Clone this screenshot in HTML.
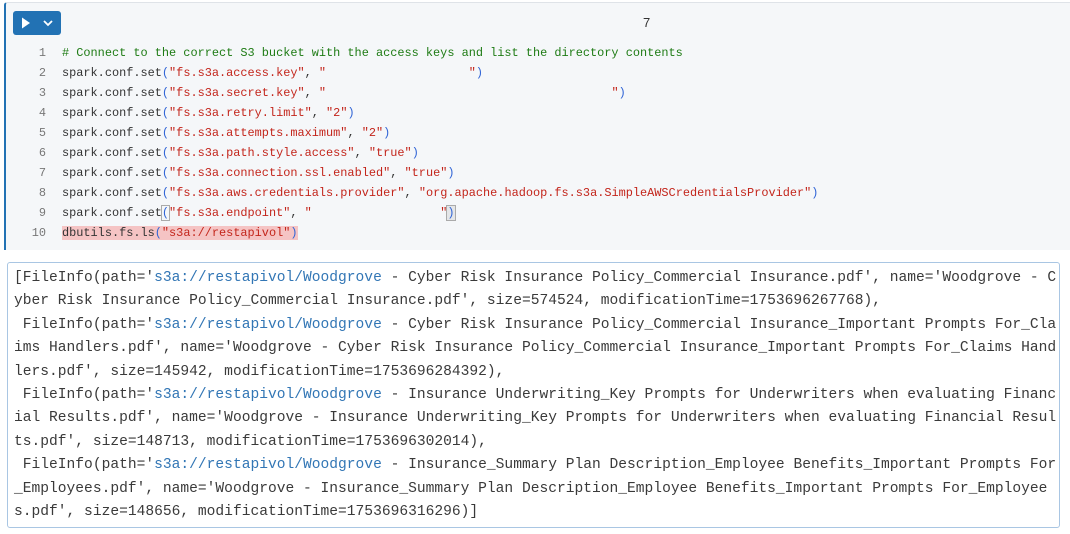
<!DOCTYPE html>
<html><head><style>
body{margin:0;width:1070px;height:534px;background:#fff;overflow:hidden;font-family:"Liberation Mono",monospace}
.cell{position:absolute;left:4px;top:2px;width:1066px;height:248px;background:#f5f7f9;border-top:1px solid #dfe3e8;border-left:2px solid #2272b4;box-sizing:border-box;border-top-left-radius:3px}
.run{position:absolute;left:13px;top:11px;width:48px;height:24px;background:#2272b4;border-radius:3px}
.num7{position:absolute;left:643px;top:15px;font-family:"Liberation Sans",sans-serif;font-size:13px;color:#333}
.code{position:absolute;left:0;top:43px;font-size:11.9px;line-height:20px;white-space:pre;color:#333}
.ln{display:inline-block;width:46px;text-align:right;padding-right:16px;color:#777}
.c{color:#1e7b14}.s{color:#c3251b}.p{color:#3064d6}
.hl{background:#f5c4c4}
.out{position:absolute;left:7px;top:262px;width:1053px;height:266px;border:1px solid #a9c6e3;border-radius:3px;box-sizing:border-box;background:#fff}
.otext{position:absolute;left:14px;top:267px;font-size:14.6px;line-height:23.4px;white-space:pre;color:#3a3a3a}
.u{color:#3276b5}
</style></head><body>
<div class="cell"></div>
<div class="run"><svg width="48" height="24"><path d="M9 6.5 L17 12 L9 17.5Z" fill="#fff"/><path d="M31 10 L35 14 L39 10" stroke="#fff" stroke-width="1.8" fill="none"/></svg></div>
<div class="num7">7</div>
<div class="code"><span class="ln">1</span><span class="c"># Connect to the correct S3 bucket with the access keys and list the directory contents</span>
<span class="ln">2</span>spark.conf.set<span class="p">(</span><span class="s">"fs.s3a.access.key"</span>, <span class="s">"                    "</span><span class="p">)</span>
<span class="ln">3</span>spark.conf.set<span class="p">(</span><span class="s">"fs.s3a.secret.key"</span>, <span class="s">"                                        "</span><span class="p">)</span>
<span class="ln">4</span>spark.conf.set<span class="p">(</span><span class="s">"fs.s3a.retry.limit"</span>, <span class="s">"2"</span><span class="p">)</span>
<span class="ln">5</span>spark.conf.set<span class="p">(</span><span class="s">"fs.s3a.attempts.maximum"</span>, <span class="s">"2"</span><span class="p">)</span>
<span class="ln">6</span>spark.conf.set<span class="p">(</span><span class="s">"fs.s3a.path.style.access"</span>, <span class="s">"true"</span><span class="p">)</span>
<span class="ln">7</span>spark.conf.set<span class="p">(</span><span class="s">"fs.s3a.connection.ssl.enabled"</span>, <span class="s">"true"</span><span class="p">)</span>
<span class="ln">8</span>spark.conf.set<span class="p">(</span><span class="s">"fs.s3a.aws.credentials.provider"</span>, <span class="s">"org.apache.hadoop.fs.s3a.SimpleAWSCredentialsProvider"</span><span class="p">)</span>
<span class="ln">9</span>spark.conf.set<span class="p" style="outline:1px solid #aaa">(</span><span class="s">"fs.s3a.endpoint"</span>, <span class="s">"                  "</span><span class="p" style="outline:1px solid #aaa;background:#e4e6e8">)</span>
<span class="ln">10</span><span class="hl">dbutils.fs.ls<span class="p">(</span><span class="s">"s3a://restapivol"</span><span class="p">)</span></span></div>
<div class="out"></div>
<div class="otext">[FileInfo(path='<span class="u">s3a://restapivol/Woodgrove</span> - Cyber Risk Insurance Policy_Commercial Insurance.pdf', name='Woodgrove - C
yber Risk Insurance Policy_Commercial Insurance.pdf', size=574524, modificationTime=1753696267768),
 FileInfo(path='<span class="u">s3a://restapivol/Woodgrove</span> - Cyber Risk Insurance Policy_Commercial Insurance_Important Prompts For_Cla
ims Handlers.pdf', name='Woodgrove - Cyber Risk Insurance Policy_Commercial Insurance_Important Prompts For_Claims Hand
lers.pdf', size=145942, modificationTime=1753696284392),
 FileInfo(path='<span class="u">s3a://restapivol/Woodgrove</span> - Insurance Underwriting_Key Prompts for Underwriters when evaluating Financ
ial Results.pdf', name='Woodgrove - Insurance Underwriting_Key Prompts for Underwriters when evaluating Financial Resul
ts.pdf', size=148713, modificationTime=1753696302014),
 FileInfo(path='<span class="u">s3a://restapivol/Woodgrove</span> - Insurance_Summary Plan Description_Employee Benefits_Important Prompts For
_Employees.pdf', name='Woodgrove - Insurance_Summary Plan Description_Employee Benefits_Important Prompts For_Employee
s.pdf', size=148656, modificationTime=1753696316296)]</div>
</body></html>
